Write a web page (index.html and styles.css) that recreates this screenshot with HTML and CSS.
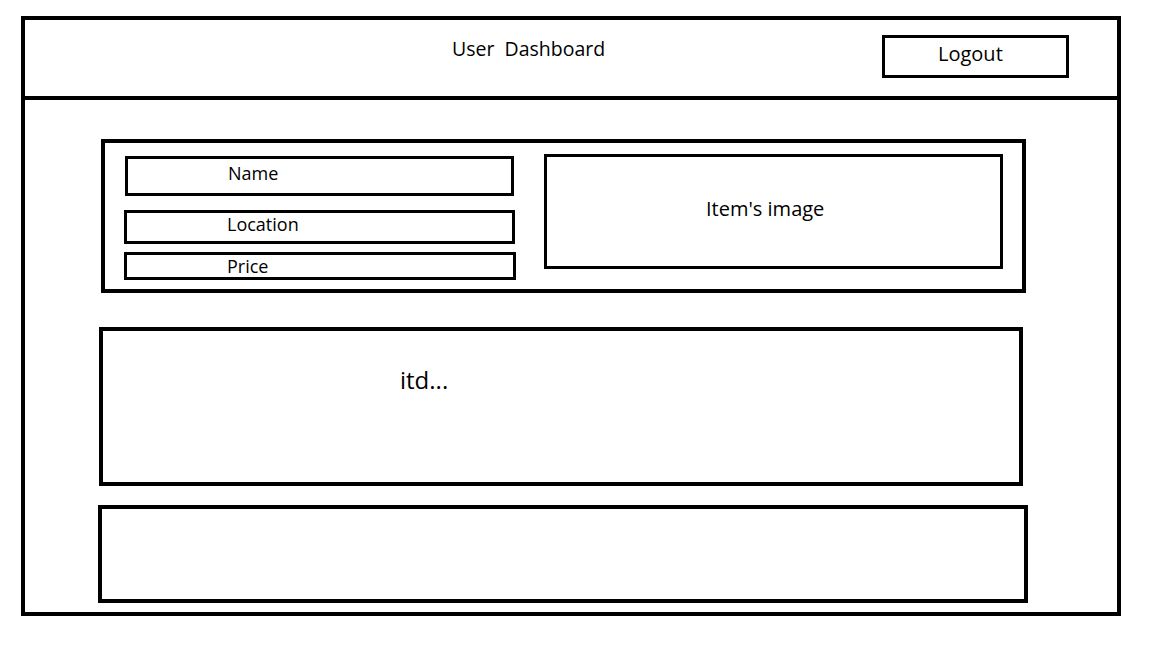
FILE: index.html
```html
<!DOCTYPE html>
<html lang="en">
<head>
<meta charset="utf-8">
<title>User Dashboard</title>
<link rel="stylesheet" href="styles.css">
</head>
<body>
<div class="frame">
  <header class="header">
    <div class="title">User&nbsp; Dashboard</div>
    <div class="logout">Logout</div>
  </header>
  <main class="content">
    <section class="item-card">
      <div class="fields">
        <div class="field field--name">Name</div>
        <div class="field field--location">Location</div>
        <div class="field field--price">Price</div>
      </div>
      <div class="item-image">Item's image</div>
    </section>
    <section class="panel panel--more">itd...</section>
    <section class="panel panel--empty"></section>
  </main>
</div>
</body>
</html>
```

FILE: styles.css
```css
* { box-sizing: border-box; }

html, body {
  margin: 0;
  padding: 0;
  background: #fff;
}

body {
  font-family: "Open Sans", "Noto Sans", sans-serif;
  color: #000;
}

.frame {
  margin: 16px 0 0 21px;
  width: 1100px;
  height: 600px;
  border: 4px solid #000;
  display: flex;
  flex-direction: column;
}

.header {
  height: 80px;
  border-bottom: 4px solid #000;
  display: flex;
  align-items: flex-start;
  flex: none;
}

.title {
  margin: 15px 0 0 427px;
  font-size: 19.5px;
  line-height: 27px;
  white-space: nowrap;
}

.logout {
  margin: 15px 48px 0 auto;
  width: 187px;
  height: 43px;
  border: 3px solid #000;
  padding: 2px 0 0 53px;
  font-size: 20px;
  line-height: 27px;
}

.content {
  display: flex;
  flex-direction: column;
  align-items: flex-start;
}

.item-card {
  margin: 39px 0 0 76px;
  width: 925px;
  height: 154px;
  border: 4px solid #000;
  display: flex;
  align-items: flex-start;
}

.fields {
  margin: 13px 0 0 20px;
  display: flex;
  flex-direction: column;
  align-items: flex-start;
}

.field {
  border: 3px solid #000;
  padding-left: 100px;
  font-size: 18px;
  line-height: 22px;
}

.field--name {
  width: 389px;
  height: 40px;
  padding-top: 3px;
}

.field--location {
  width: 391px;
  height: 34px;
  margin: 14px 0 0 -1px;
}

.field--price {
  width: 392px;
  height: 28px;
  margin: 8px 0 0 -1px;
}

.item-image {
  margin: 11px 0 0 28px;
  width: 459px;
  height: 115px;
  border: 3px solid #000;
  padding: 38px 0 0 159px;
  font-size: 20px;
  line-height: 27px;
}

.panel {
  border: 4px solid #000;
}

.panel--more {
  margin: 34px 0 0 74px;
  width: 924px;
  height: 159px;
  padding: 32px 0 0 297px;
  font-size: 24px;
  line-height: 33px;
}

.panel--empty {
  margin: 19px 0 0 73px;
  width: 930px;
  height: 98px;
}
```
